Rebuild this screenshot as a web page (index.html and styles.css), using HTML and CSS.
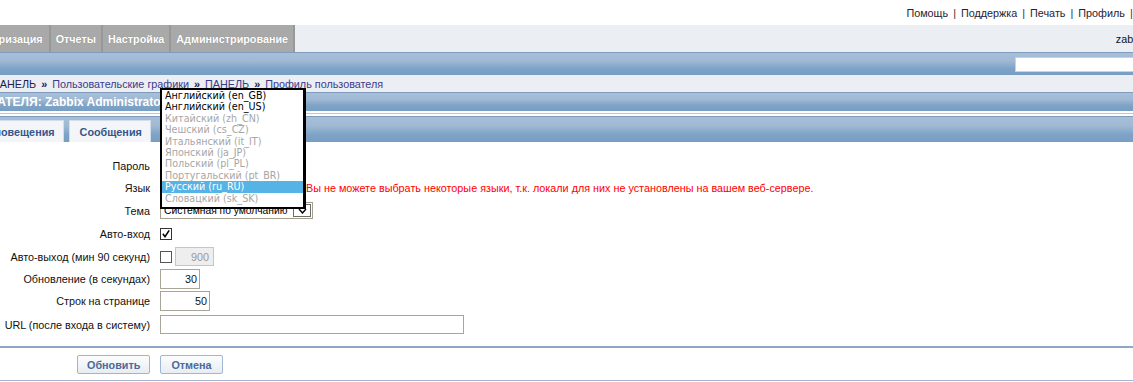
FILE: index.html
```html
<!DOCTYPE html>
<html lang="ru">
<head>
<meta charset="utf-8">
<title>Профиль пользователя</title>
<link rel="stylesheet" href="styles.css">
</head>
<body>
<div class="page">
  <div class="toplinks">
    <a class="toplink">Помощь</a><span class="sep">|</span><a class="toplink">Поддержка</a><span class="sep">|</span><a class="toplink">Печать</a><span class="sep">|</span><a class="toplink">Профиль</a><span class="sep">|</span><a class="toplink">Выход</a>
  </div>

  <div class="mainmenu">
    <ul class="menu">
      <li class="menu-item first">Инвентаризация</li>
      <li class="menu-item">Отчеты</li>
      <li class="menu-item">Настройка</li>
      <li class="menu-item">Администрирование</li>
    </ul>
    <div class="server">zabbix</div>
  </div>

  <div class="subband">
    <input class="search" type="text">
  </div>

  <div class="history">
    <span class="crumb first">ПАНЕЛЬ</span><span class="raquo">»</span><a class="crumb link">Пользовательские графики</a><span class="raquo">»</span><a class="crumb link">ПАНЕЛЬ</a><span class="raquo">»</span><a class="crumb link">Профиль пользователя</a>
  </div>

  <div class="header"><span class="header-title">ПРОФИЛЬ ПОЛЬЗОВАТЕЛЯ: Zabbix Administrator</span></div>

  <div class="divider"></div>

  <div class="tabbar">
    <div class="tab first">Оповещения</div>
    <div class="tab">Сообщения</div>
  </div>

  <div class="form">
    <div class="label">Пароль</div>
    <div class="field"><button class="btn-small" type="button">Изменить пароль</button></div>

    <div class="label">Язык</div>
    <div class="field"><div class="select lang">Русский (ru_RU)</div><span class="error">Вы не можете выбрать некоторые языки, т.к. локали для них не установлены на вашем веб-сервере.</span></div>

    <div class="label">Тема</div>
    <div class="field">
      <div class="select theme"><span class="select-text">Системная по умолчанию</span><span class="select-arrow"><svg width="9" height="6" viewBox="0 0 9 6"><polyline points="1,1 4.5,5 8,1" fill="none" stroke="#000" stroke-width="1.4"/></svg></span></div>
    </div>

    <div class="label">Авто-вход</div>
    <div class="field"><span class="checkbox"><svg width="12" height="12" viewBox="0 0 12 12"><path d="M2.2 5.8 L4.8 9.2 L9.8 1.6" fill="none" stroke="#000" stroke-width="1.9"/></svg></span></div>

    <div class="label">Авто-выход (мин 90 секунд)</div>
    <div class="field"><span class="checkbox unchecked"></span><span class="input disabled small">900</span></div>

    <div class="label">Обновление (в секундах)</div>
    <div class="field"><span class="input w40">30</span></div>

    <div class="label">Строк на странице</div>
    <div class="field"><span class="input w50">50</span></div>

    <div class="label">URL (после входа в систему)</div>
    <div class="field"><span class="input url"></span></div>
  </div>

  <div class="footer-line"></div>
  <div class="buttons">
    <button class="btn primary" type="button">Обновить</button>
    <button class="btn" type="button">Отмена</button>
  </div>
  <div class="bottom-line"></div>

  <ul class="dropdown">
    <li class="opt">Английский (en_GB)</li>
    <li class="opt">Английский (en_US)</li>
    <li class="opt off">Китайский (zh_CN)</li>
    <li class="opt off">Чешский (cs_CZ)</li>
    <li class="opt off">Итальянский (it_IT)</li>
    <li class="opt off">Японский (ja_JP)</li>
    <li class="opt off">Польский (pl_PL)</li>
    <li class="opt off">Португальский (pt_BR)</li>
    <li class="opt selected">Русский (ru_RU)</li>
    <li class="opt off">Словацкий (sk_SK)</li>
  </ul>
</div>
</body>
</html>
```

FILE: styles.css
```css
html, body {
  margin: 0;
  padding: 0;
  overflow: hidden;
  background: #fff;
}
body {
  font-family: "Liberation Sans", Arial, sans-serif;
  font-size: 10.8px;
  color: #000;
}
.page {
  position: relative;
  width: 1133px;
  height: 382px;
}

/* top links */
.toplinks {
  height: 25px;
  display: flex;
  justify-content: flex-end;
  align-items: center;
  margin-right: -37px;
  color: #1e2433;
}
.toplink { color: #1e2433; }
.sep { margin: 0 5px; color: #333; }

/* main menu */
.mainmenu {
  height: 27px;
  background: #ebeef2;
  display: flex;
  align-items: center;
}
.menu {
  list-style: none;
  margin: 0;
  padding: 0;
  display: flex;
  height: 27px;
}
.menu-item {
  height: 27px;
  padding: 0 5px;
  background: #a9a9a9;
  color: #fff;
  font-weight: bold;
  display: flex;
  align-items: center;
  border-right: 2px solid #989898;
  text-shadow: 0 0 1px rgba(0,0,0,0.25);
}
.menu-item.first { margin-left: -51px; padding-right: 6px; }
.server {
  margin-left: auto;
  margin-right: -14px;
  color: #111;
}

/* blue bands */
.subband, .header, .tabbar {
  border-top: 1px solid #7f9bbd;
  background: linear-gradient(to bottom, #a7bfd8 0%, #a0b9d4 35%, #7ea3c6 70%, #769ec3 100%);
}
.subband {
  height: 22px;
  display: flex;
  align-items: center;
}
.search {
  margin-left: auto;
  margin-right: -40px;
  width: 158px;
  height: 15px;
  box-sizing: border-box;
  border: 1px solid #c8d3e0;
  background: #fff;
  padding: 0;
}

/* breadcrumbs */
.history {
  height: 16px;
  background: #ebeef2;
  display: flex;
  align-items: center;
  padding-top: 1px;
  color: #1d2a6a;
}
.crumb.first { margin-left: -8px; color: #1a2050; }
.crumb.link { color: #3b3b8c; }
.raquo { font-weight: bold; margin: 0 5px; color: #1a2050; }

/* header */
.header {
  height: 18px;
  display: flex;
  align-items: center;
  color: #fff;
  font-weight: bold;
  font-size: 12px;
}
.header-title { margin-left: -127px; white-space: nowrap; }

.divider {
  height: 1px;
  background: #b8c5d7;
  margin: 2px 0;
}

/* tabs */
.tabbar {
  height: 25px;
  display: flex;
  align-items: flex-end;
  gap: 5px;
}
.tab {
  height: 22px;
  box-sizing: border-box;
  padding: 0 8px 0 10px;
  background: #f3f5f8;
  border: 1px solid #d5dde8;
  border-bottom: none;
  color: #34568b;
  font-weight: bold;
  display: flex;
  align-items: center;
}
.tab.first { margin-left: -25px; }

/* form */
.form {
  display: grid;
  grid-template-columns: 150px 1fr;
  grid-template-rows: 22px 22px 23px 23px 23px 22px 22px 25px;
  column-gap: 10px;
  align-items: center;
  padding-top: 13px;
}
.label {
  text-align: right;
  white-space: nowrap;
  color: #111;
}
.field {
  display: flex;
  align-items: center;
  gap: 3px;
}
.btn-small {
  font: inherit;
  height: 18px;
  padding: 0 6px;
  border: 1px solid #9db5d3;
  background: #f3f5f8;
}
.select {
  height: 17px;
  box-sizing: border-box;
  border: 1px solid #a59f90;
  background: #fff;
  display: flex;
  align-items: center;
  padding-left: 3px;
  white-space: nowrap;
}
.select.lang { width: 143px; }
.select.theme { width: 153px; justify-content: space-between; padding-right: 1px; gap: 1px; }
.select-text { overflow: hidden; flex: 1; min-width: 0; font-size: 10.3px; }
.select-arrow {
  flex: none;
  width: 18px;
  height: 13px;
  box-sizing: border-box;
  border: 1px solid #6d6d6d;
  display: flex;
  align-items: center;
  justify-content: center;
  background: #fff;
}
.error { color: #f00; white-space: nowrap; }

.checkbox {
  width: 12px;
  height: 12px;
  box-sizing: border-box;
  border: 1px solid #333;
  background: #fff;
  display: flex;
  align-items: center;
  justify-content: center;
}
.checkbox svg { display: block; }
.checkbox.unchecked { border-color: #555; }

.input {
  height: 20px;
  box-sizing: border-box;
  border: 1px solid #a9a597;
  background: #fff;
  display: flex;
  align-items: center;
  justify-content: flex-end;
  padding-right: 2px;
  color: #111;
}
.input.small { width: 39px; }
.input.disabled {
  background: #eeeeee;
  border-color: #c6c6c6;
  color: #9a9a9a;
  padding-right: 4px;
  height: 19px;
}
.input.w40 { width: 40px; }
.input.w50 { width: 50px; }
.input.url { width: 304px; height: 19px; }

/* footer */
.footer-line {
  height: 2px;
  background: #8ea6c4;
  margin-top: 9px;
}
.buttons {
  display: flex;
  gap: 10px;
  padding: 7px 0 6px 77px;
}
.btn {
  font-family: "Liberation Sans", Arial, sans-serif;
  font-size: 10.8px;
  font-weight: bold;
  color: #4a6a98;
  height: 19px;
  padding: 0 9px;
  border: 1px solid #9fb6d4;
  border-radius: 2px;
  background: linear-gradient(to bottom, #fbfcfd, #e8edf3);
}
.btn.primary { border-color: #f6a53a; }
.btn + .btn { padding: 0 10px; }
.bottom-line {
  height: 1px;
  background: #a3b6ce;
}

/* open language list */
.dropdown {
  position: absolute;
  left: 160px;
  top: 88px;
  width: 146px;
  margin: 0;
  padding: 0 0 3px 0;
  box-sizing: border-box;
  list-style: none;
  background: #fff;
  border: 2px solid #000;
  border-right-width: 3px;
  font-family: "DejaVu Sans", Verdana, sans-serif;
  font-size: 9.6px;
}
.opt {
  height: 11.4px;
  line-height: 11.4px;
  padding-left: 3px;
  white-space: nowrap;
  color: #000;
}
.opt.off { color: #a6a6a6; }
.opt.selected { background: #56b3e6; color: #fff; }
```
